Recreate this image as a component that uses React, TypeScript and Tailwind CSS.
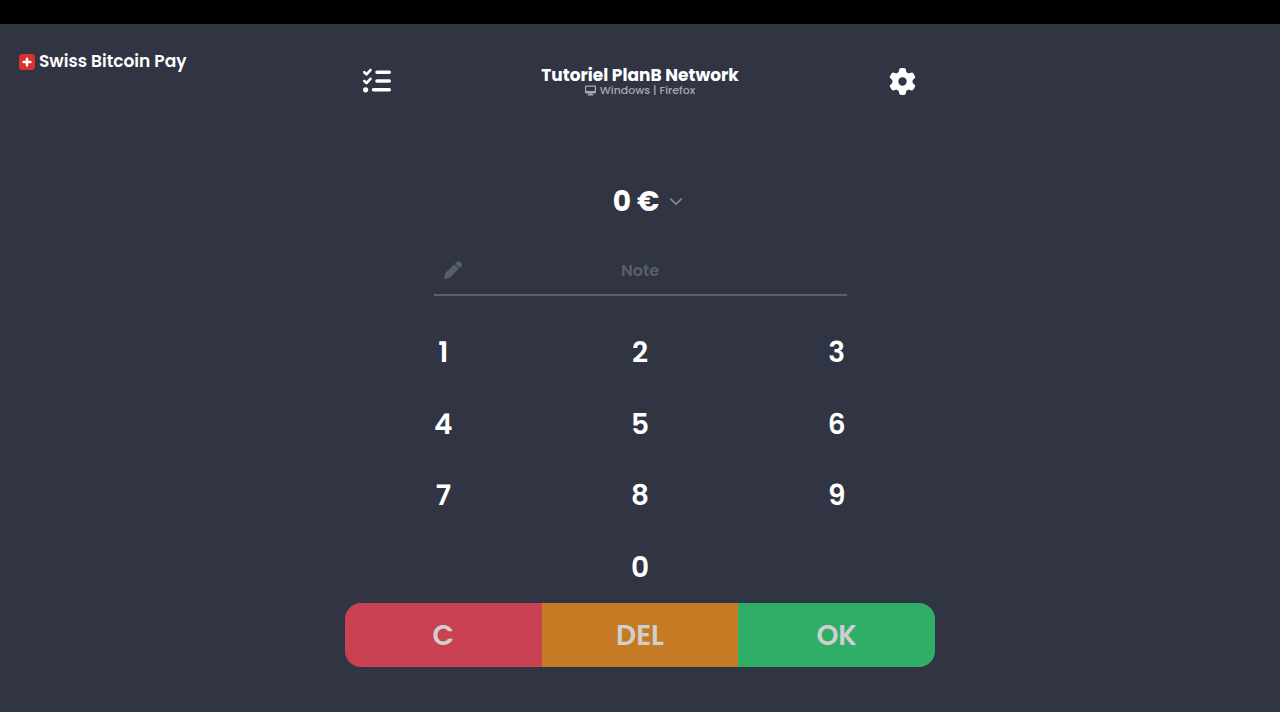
import { useState } from "react";
import { FaDesktop, FaGear, FaListCheck, FaPen } from "react-icons/fa6";

const digits = ["1", "2", "3", "4", "5", "6", "7", "8", "9", "0"];

function SwissMark() {
  return (
    <svg viewBox="0 0 16 16" className="size-4" aria-hidden="true">
      <rect width="16" height="16" rx="3.5" fill="#d8342c" />
      <path d="M8 4.6v6.8M4.6 8h6.8" stroke="#fff" strokeWidth="2.4" strokeLinecap="round" />
    </svg>
  );
}

function AmountRow({ amount }: { amount: string }) {
  return (
    <div className="flex h-10 items-center justify-center gap-1.5 pt-0.5 pl-4 text-[28px] font-bold">
      <output htmlFor="keypad">{amount}</output>
      <div className="grid items-center">
        <select
          aria-label="Currency"
          defaultValue="EUR"
          className="col-start-1 row-start-1 field-sizing-content appearance-none bg-transparent pr-6 outline-none"
        >
          <option value="EUR">€</option>
          <option value="USD">$</option>
        </select>
        <svg
          viewBox="0 0 14 8"
          className="pointer-events-none col-start-1 row-start-1 h-2 w-3.5 justify-self-end"
          fill="none"
          stroke="#7f8793"
          strokeWidth="1.8"
          strokeLinecap="round"
          strokeLinejoin="round"
          aria-hidden="true"
        >
          <path d="M1.8 1.2 7 6.2l5.2-5" />
        </svg>
      </div>
    </div>
  );
}

export default function App() {
  const [amount, setAmount] = useState("0");
  const press = (digit: string) => setAmount((a) => (a === "0" ? digit : a + digit));

  return (
    <div className="flex min-h-screen flex-col bg-[#313543] font-['Poppins','Inter',sans-serif] text-white">
      <div className="h-6 bg-black" />
      <div className="grid flex-1 grid-cols-[1fr_minmax(0,590px)_1fr] border-t border-[#393a38]">
        <a href="/" className="mt-6 ml-[19px] flex h-[26px] items-center gap-1 self-start text-[17px] font-semibold">
          <SwissMark />
          Swiss Bitcoin Pay
        </a>

        <main className="flex flex-col">
          <header className="mt-9 flex h-10 items-center justify-between px-4">
            <button aria-label="Payment history" className="grid size-8 place-items-center">
              <FaListCheck size={28} />
            </button>
            <div className="flex flex-col items-center">
              <h1 className="text-[17px] leading-[18px] font-bold">Tutoriel PlanB Network</h1>
              <p className="flex items-center gap-1 text-[11px] leading-3 font-medium text-[#a3aab6]">
                <FaDesktop size={11} />
                Windows | Firefox
              </p>
            </div>
            <button aria-label="Settings" className="grid size-8 place-items-center">
              <FaGear size={27} />
            </button>
          </header>

          <div className="mt-20">
            <AmountRow amount={amount} />
          </div>

          <label className="mx-[15%] mt-6 grid h-[51px] items-center border-b-2 border-[#565f6d]">
            <FaPen size={18} className="col-start-1 row-start-1 ml-2.5 text-[#56606d]" aria-hidden="true" />
            <input
              type="text"
              aria-label="Note"
              placeholder="Note"
              className="col-start-1 row-start-1 h-full w-full bg-transparent pt-0.5 text-center text-base font-semibold outline-none placeholder:text-[#56606d]"
            />
          </label>

          <div id="keypad" className="mt-5 grid h-[287px] grid-cols-3 grid-rows-4 text-[28px] font-semibold">
            {digits.map((d) => (
              <button key={d} onClick={() => press(d)} className={d === "0" ? "col-start-2 pt-0.5" : "pt-0.5"}>
                {d}
              </button>
            ))}
          </div>

          <div className="grid h-16 grid-cols-3 overflow-hidden rounded-2xl text-[28px] font-semibold text-[#cfcfcf]">
            <button onClick={() => setAmount("0")} className="bg-[#ca4252] pt-0.5">
              C
            </button>
            <button onClick={() => setAmount((a) => a.slice(0, -1) || "0")} className="bg-[#c57b23] pt-0.5">
              DEL
            </button>
            <button className="bg-[#2fae68] pt-0.5">OK</button>
          </div>
        </main>
      </div>
    </div>
  );
}
